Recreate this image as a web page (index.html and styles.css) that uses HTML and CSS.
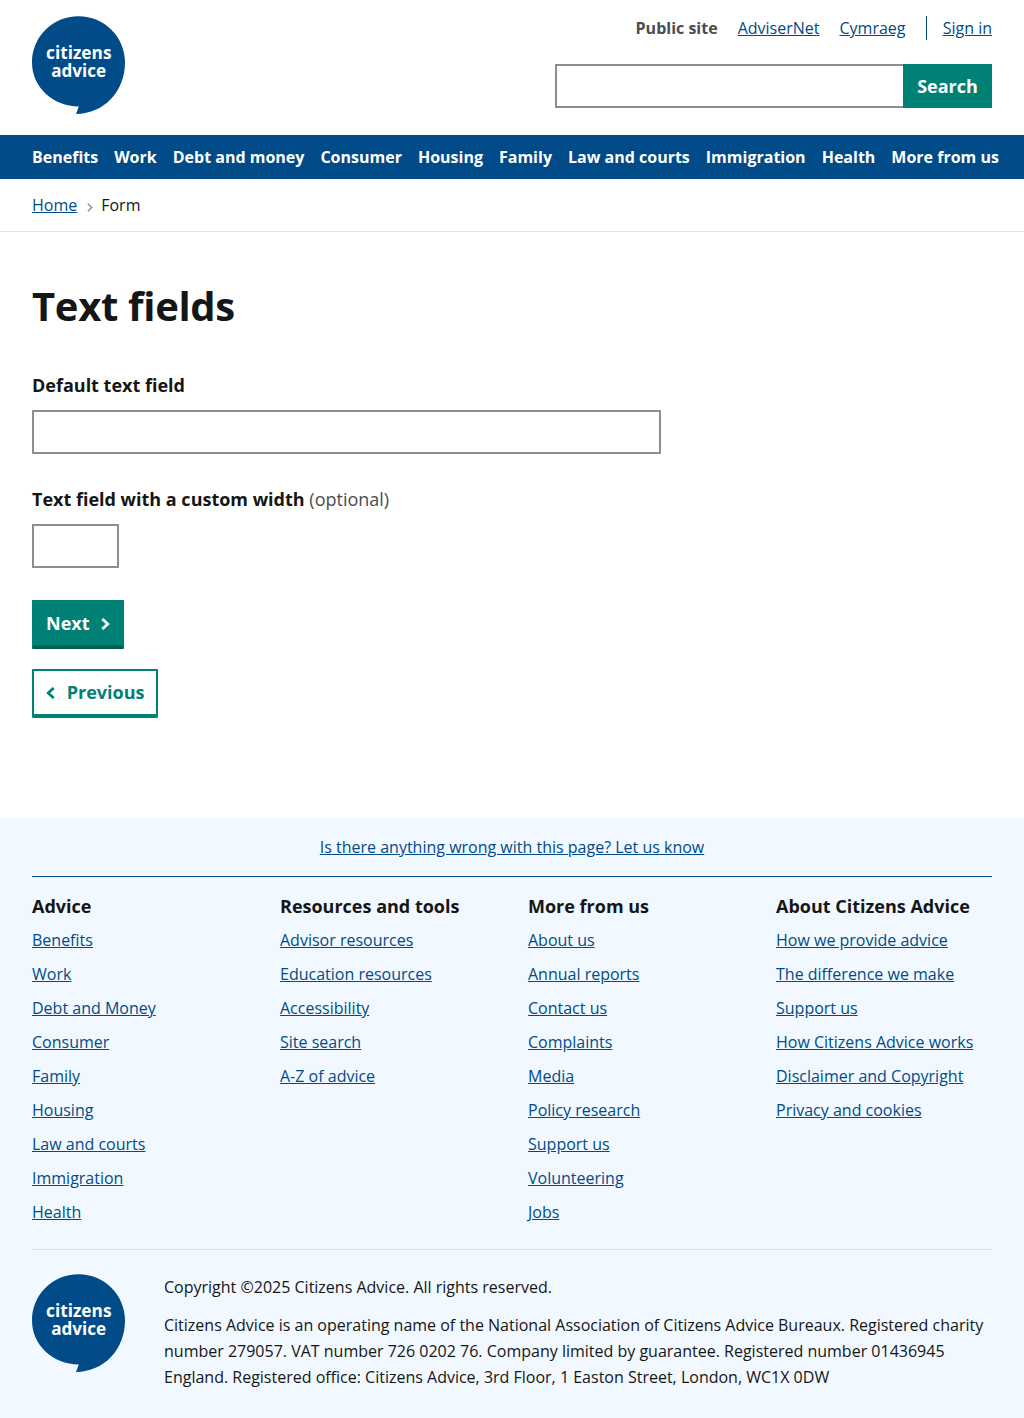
FILE: index.html
```html
<!DOCTYPE html>
<html lang="en">
<head>
<meta charset="utf-8">
<title>Text fields</title>
<link rel="stylesheet" href="styles.css">
</head>
<body>
<header class="header">
  <a class="logo" href="#">
    <svg width="93" height="98" viewBox="0 0 93 98">
      <path fill="#004b88" d="M46.500 .3C72.200 .3 93 20.800 93 46.500C93 75 72.500 97.700 44 98L46.800 90.500C21 90.500 0 71 0 46.500C0 20.800 20.800 .3 46.500 .3Z"/>
      <text class="logo-text" x="14" y="43.400" textLength="65.500" lengthAdjust="spacingAndGlyphs">citizens</text>
      <text class="logo-text" x="19.200" y="61.400" textLength="55" lengthAdjust="spacingAndGlyphs">advice</text>
    </svg>
  </a>
  <div class="header-side">
    <ul class="header-links">
      <li><strong>Public site</strong></li>
      <li><a href="#">AdviserNet</a></li>
      <li><a href="#">Cymraeg</a></li>
      <li class="sign-in"><a href="#">Sign in</a></li>
    </ul>
    <form class="search">
      <input class="search-input" type="text" aria-label="Search">
      <button class="search-button" type="button">Search</button>
    </form>
  </div>
</header>
<nav class="nav">
  <a href="#">Benefits</a>
  <a href="#">Work</a>
  <a href="#">Debt and money</a>
  <a href="#">Consumer</a>
  <a href="#">Housing</a>
  <a href="#">Family</a>
  <a href="#">Law and courts</a>
  <a href="#">Immigration</a>
  <a href="#">Health</a>
  <a href="#">More from us</a>
</nav>
<div class="breadcrumbs">
  <a href="#">Home</a>
  <svg class="crumb-arrow" width="6" height="9" viewBox="0 0 6 9"><path d="M.8 .7L4.700 4.500L.8 8.300" fill="none" stroke="#8b8f92" stroke-width="1.400"/></svg>
  <span>Form</span>
</div>
<main class="main">
  <h1>Text fields</h1>
  <form>
    <div class="field">
      <label for="default-field">Default text field</label>
      <input id="default-field" class="input" type="text">
    </div>
    <div class="field">
      <label for="short-field">Text field with a custom width <span class="optional">(optional)</span></label>
      <input id="short-field" class="input input-short" type="text">
    </div>
    <div class="actions">
      <button class="button primary" type="button">Next
        <svg width="9" height="12" viewBox="0 0 9 12"><path d="M1.300 .9L6.800 6L1.300 11.100" fill="none" stroke="currentColor" stroke-width="2.700"/></svg>
      </button>
      <button class="button secondary" type="button">
        <svg width="9" height="12" viewBox="0 0 9 12"><path d="M7.700 .9L2.200 6L7.700 11.100" fill="none" stroke="currentColor" stroke-width="2.700"/></svg>
        Previous</button>
    </div>
  </form>
</main>
<footer class="footer">
  <div class="feedback"><a href="#">Is there anything wrong with this page? Let us know</a></div>
  <div class="footer-columns">
    <section>
      <h2>Advice</h2>
      <ul>
        <li><a href="#">Benefits</a></li>
        <li><a href="#">Work</a></li>
        <li><a href="#">Debt and Money</a></li>
        <li><a href="#">Consumer</a></li>
        <li><a href="#">Family</a></li>
        <li><a href="#">Housing</a></li>
        <li><a href="#">Law and courts</a></li>
        <li><a href="#">Immigration</a></li>
        <li><a href="#">Health</a></li>
      </ul>
    </section>
    <section>
      <h2>Resources and tools</h2>
      <ul>
        <li><a href="#">Advisor resources</a></li>
        <li><a href="#">Education resources</a></li>
        <li><a href="#">Accessibility</a></li>
        <li><a href="#">Site search</a></li>
        <li><a href="#">A-Z of advice</a></li>
      </ul>
    </section>
    <section>
      <h2>More from us</h2>
      <ul>
        <li><a href="#">About us</a></li>
        <li><a href="#">Annual reports</a></li>
        <li><a href="#">Contact us</a></li>
        <li><a href="#">Complaints</a></li>
        <li><a href="#">Media</a></li>
        <li><a href="#">Policy research</a></li>
        <li><a href="#">Support us</a></li>
        <li><a href="#">Volunteering</a></li>
        <li><a href="#">Jobs</a></li>
      </ul>
    </section>
    <section>
      <h2>About Citizens Advice</h2>
      <ul>
        <li><a href="#">How we provide advice</a></li>
        <li><a href="#">The difference we make</a></li>
        <li><a href="#">Support us</a></li>
        <li><a href="#">How Citizens Advice works</a></li>
        <li><a href="#">Disclaimer and Copyright</a></li>
        <li><a href="#">Privacy and cookies</a></li>
      </ul>
    </section>
  </div>
  <div class="legal">
    <a class="logo" href="#">
      <svg width="93" height="98" viewBox="0 0 93 98">
        <path fill="#004b88" d="M46.500 .3C72.200 .3 93 20.800 93 46.500C93 75 72.500 97.700 44 98L46.800 90.500C21 90.500 0 71 0 46.500C0 20.800 20.800 .3 46.500 .3Z"/>
        <text class="logo-text" x="14" y="43.400" textLength="65.500" lengthAdjust="spacingAndGlyphs">citizens</text>
        <text class="logo-text" x="19.200" y="61.400" textLength="55" lengthAdjust="spacingAndGlyphs">advice</text>
      </svg>
    </a>
    <div class="legal-text">
      <p>Copyright ©2025 Citizens Advice. All rights reserved.</p>
      <p>Citizens Advice is an operating name of the National Association of Citizens Advice Bureaux. Registered charity number 279057. VAT number 726 0202 76. Company limited by guarantee. Registered number 01436945 England. Registered office: Citizens Advice, 3rd Floor, 1 Easton Street, London, WC1X 0DW</p>
    </div>
  </div>
</footer>
</body>
</html>
```
FILE: styles.css
```css
*, *::before, *::after { box-sizing: border-box; }
body {
  margin: 0;
  background: #fff;
  color: #151616;
  font: 16px/26px "Open Sans", sans-serif;
}
a { color: #004b88; text-decoration: underline; }
ul { list-style: none; margin: 0; padding: 0; }
svg { display: block; }
h1, h2, p { margin: 0; }
button, input { font-family: inherit; margin: 0; border-radius: 0; }
.logo-text { font: 700 18px "Open Sans", sans-serif; fill: #fff; }
.logo { display: block; width: 93px; height: 98px; flex: none; text-decoration: none; }

.header { display: flex; justify-content: space-between; height: 135px; padding: 16px 32px 0; }
.header-side { display: flex; flex-direction: column; align-items: flex-end; gap: 24px; }
.header-links { display: flex; gap: 20px; line-height: 24px; }
.header-links strong { color: #4a4d50; }
.sign-in { border-left: 1px solid #004b88; margin-left: .2px; padding-left: 16px; }
.search { display: flex; width: 437px; height: 44px; }
.search-input { flex: 1; min-width: 0; border: 2px solid #8b8f92; border-right: 0; }
.search-button { width: 89px; padding: 0; border: 0; background: #008175; color: #fff; font-size: 18px; font-weight: 700; }

.nav { display: flex; gap: 16px; height: 44px; padding-left: 32px; background: #004b88; line-height: 44px; white-space: nowrap; }
.nav a { color: #fff; font-weight: 700; text-decoration: none; }
.breadcrumbs { display: flex; align-items: center; height: 53px; padding: 0 32px; border-bottom: 1px solid #e1e3e5; }
.crumb-arrow { margin: 4px 8px 0 10px; }

.main { height: 586px; padding: 48px 32px 0; }
h1 { font-size: 40px; line-height: 52px; letter-spacing: -.32px; margin-bottom: 40px; }
.field { margin-bottom: 32px; }
.field label { display: block; font-size: 18px; font-weight: 700; line-height: 26px; margin-bottom: 12px; }
.optional { color: #4a4d50; font-weight: 400; }
.input { display: block; width: 629px; height: 44px; border: 2px solid #8b8f92; }
.input-short { width: 87px; }
.actions { display: flex; flex-direction: column; align-items: flex-start; gap: 20px; }
.button { display: flex; align-items: center; height: 49px; font-size: 18px; font-weight: 700; line-height: 26px; padding: 0 12px 2px; border: 2px solid #008175; border-bottom-width: 4px; border-radius: 1px; gap: 11px; }
.primary { background: #008175; color: #fff; border-bottom-color: #005e56; }
.secondary { background: #fff; color: #008175; gap: 11.7px; padding-right: 11.3px; }
.button svg { margin-top: 2px; }

.footer { height: 600px; padding: 0 32px; background: #f1f8ff; }
.feedback { height: 59px; padding-top: 16px; border-bottom: 1px solid #004b88; text-align: center; }
.footer-columns { display: grid; grid-template-columns: repeat(4, 216px); gap: 32px; height: 373px; padding-top: 16px; border-bottom: 1px solid #e0e2ea; }
.footer-columns h2 { font-size: 18px; line-height: 26px; margin-bottom: 8px; }
.footer-columns li { margin-bottom: 8px; }
.legal { display: flex; gap: 39px; padding-top: 24px; }
.legal-text p { margin-bottom: 12px; }
```
